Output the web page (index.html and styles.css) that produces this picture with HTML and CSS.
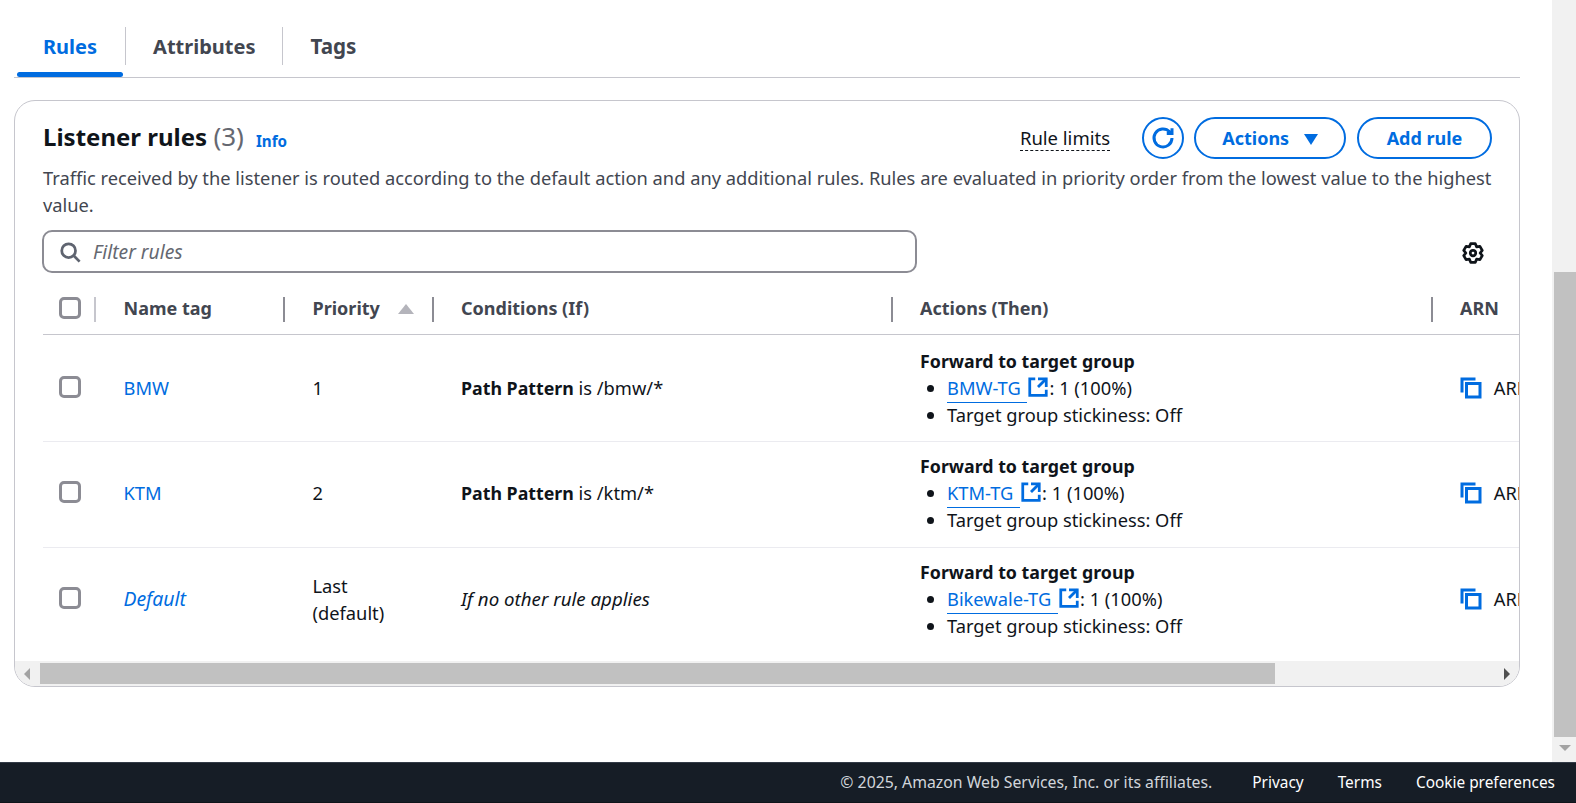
FILE: index.html
```html
<!doctype html>
<html>
<head>
<meta charset="UTF-8">
<title>Listener rules</title>
<link rel="stylesheet" href="styles.css">
</head>

<body>
  <div class="page">
    <main class="content">
      <div class="tabs">
        <a class="tab active" href="#"><span>Rules</span></a>
        <a class="tab" href="#"><span>Attributes</span></a>
        <a class="tab" href="#"><span>Tags</span></a>
      </div>

      <section class="card">
        <div class="card-top">
          <div class="card-head">
            <h2>Listener rules <span class="count">(3)</span></h2>
            <a class="info" href="#">Info</a>
            <a class="limits" href="#">Rule limits</a>
            <button class="btn round" aria-label="Refresh">
              <svg viewBox="0 0 16 16" width="24" height="24"><path d="M10.5 5H14V1.5"/><path d="M14 8a6 6 0 1 1-1.6-4.1L14 5"/></svg>
            </button>
            <button class="btn actions">Actions <i class="caret"></i></button>
            <button class="btn add">Add rule</button>
          </div>
          <p class="desc">Traffic received by the listener is routed according to the default action and any additional rules. Rules are evaluated in priority order from the lowest value to the highest<br>value.</p>
          <div class="filter-row">
            <label class="filter">
              <svg viewBox="0 0 16 16" width="22" height="22"><circle cx="7" cy="7" r="5"/><path d="M10.6 10.6 15 15"/></svg>
              <span>Filter rules</span>
            </label>
            <svg class="gear" viewBox="0 0 16 16" width="22" height="22"><path d="M9.69 1.21 10.6 3.5 13.04 3.14 14.73 6.07 13.2 8 14.73 9.93 13.04 12.86 10.6 12.5 9.69 14.79H6.31L5.4 12.5 2.96 12.86 1.27 9.93 2.8 8 1.27 6.07 2.96 3.14 5.4 3.5 6.31 1.21Z"/><circle cx="8" cy="8" r="2"/></svg>
          </div>
        </div>

        <div class="table-wrap">
          <table class="rules">
            <colgroup>
              <col class="c-check"><col class="c-name"><col class="c-prio"><col class="c-cond"><col class="c-act"><col class="c-arn">
            </colgroup>
            <thead>
              <tr>
                <th class="cell-check"><div class="th first"><i class="check"></i></div></th>
                <th class="wide"><div class="th">Name tag</div></th>
                <th class="wide"><div class="th">Priority <i class="sort"></i></div></th>
                <th><div class="th">Conditions (If)</div></th>
                <th><div class="th">Actions (Then)</div></th>
                <th><div class="th last">ARN</div></th>
              </tr>
            </thead>
            <tbody>
              <tr>
                <td class="cell-check"><i class="check"></i></td>
                <td class="wide"><a href="#">BMW</a></td>
                <td class="wide">1</td>
                <td><b>Path Pattern</b> is /bmw/*</td>
                <td>
                  <b>Forward to target group</b>
                  <ul>
                    <li><a class="ext" href="#"><span>BMW-TG </span><svg viewBox="0 0 16 16" width="22" height="22"><path d="M14 8V2H8"/><path d="M14 2 8 8"/><path d="M6 2H2v12h12v-4"/></svg></a>: 1 (100%)</li>
                    <li>Target group stickiness: Off</li>
                  </ul>
                </td>
                <td class="arn"><svg viewBox="0 0 16 16" width="24" height="24"><path d="M2 11V2h9"/><path d="M5 5h9v9H5z"/></svg> ARN</td>
              </tr>
              <tr>
                <td class="cell-check"><i class="check"></i></td>
                <td class="wide"><a href="#">KTM</a></td>
                <td class="wide">2</td>
                <td><b>Path Pattern</b> is /ktm/*</td>
                <td>
                  <b>Forward to target group</b>
                  <ul>
                    <li><a class="ext" href="#"><span>KTM-TG </span><svg viewBox="0 0 16 16" width="22" height="22"><path d="M14 8V2H8"/><path d="M14 2 8 8"/><path d="M6 2H2v12h12v-4"/></svg></a>: 1 (100%)</li>
                    <li>Target group stickiness: Off</li>
                  </ul>
                </td>
                <td class="arn"><svg viewBox="0 0 16 16" width="24" height="24"><path d="M2 11V2h9"/><path d="M5 5h9v9H5z"/></svg> ARN</td>
              </tr>
              <tr>
                <td class="cell-check"><i class="check"></i></td>
                <td class="wide"><a class="default" href="#"><em>Default</em></a></td>
                <td class="wide">Last<br>(default)</td>
                <td><em>If no other rule applies</em></td>
                <td>
                  <b>Forward to target group</b>
                  <ul>
                    <li><a class="ext" href="#"><span>Bikewale-TG </span><svg viewBox="0 0 16 16" width="22" height="22"><path d="M14 8V2H8"/><path d="M14 2 8 8"/><path d="M6 2H2v12h12v-4"/></svg></a>: 1 (100%)</li>
                    <li>Target group stickiness: Off</li>
                  </ul>
                </td>
                <td class="arn"><svg viewBox="0 0 16 16" width="24" height="24"><path d="M2 11V2h9"/><path d="M5 5h9v9H5z"/></svg> ARN</td>
              </tr>
            </tbody>
          </table>
        </div>

        <div class="hbar">
          <i class="arrow-left"></i>
          <div class="hbar-thumb"></div>
          <i class="arrow-right"></i>
        </div>
      </section>
    </main>

    <div class="vbar">
      <div class="vbar-thumb"></div>
      <i class="arrow-down"></i>
    </div>
  </div>

  <footer class="foot">
    <span class="copy">© 2025, Amazon Web Services, Inc. or its affiliates.</span>
    <a href="#">Privacy</a>
    <a href="#">Terms</a>
    <a href="#">Cookie preferences</a>
  </footer>
</body>
</html>
```

FILE: styles.css
```css
html, body {
  height: 100%;
  margin: 0;
}
body {
  display: flex;
  flex-direction: column;
  overflow: hidden;
  background-color: #fff;
  color: #0f141a;
  font-family: "Noto Sans", sans-serif;
  font-size: 18.3px;
  line-height: 27px;
}
a {
  color: #006ce0;
  text-decoration: none;
}
em {
  font-size: 18.7px;
}
svg {
  fill: none;
  stroke: currentColor;
  stroke-width: 2;
}
.page {
  flex: 1;
  display: flex;
  min-height: 0;
}
.content {
  flex: 1;
  min-width: 0;
  padding: 27px 32px 0 14px;
}

/* tabs */
.tabs {
  display: flex;
  height: 50px;
  padding-left: 3px;
  border-bottom: 1px solid #c6c6cd;
}
.tab {
  position: relative;
  height: 38px;
  padding: 0 28px 0 26px;
  border-right: 1px solid #c6c6cd;
  color: #424650;
  font-size: 20px;
  font-weight: 700;
  line-height: 39px;
}
.tab:last-child {
  border-right: none;
  padding-left: 27px;
  font-size: 20.6px;
}
.tab:nth-child(2) {
  padding: 0 27px;
}
.tab.active {
  color: #006ce0;
}
.tab.active:after {
  content: '';
  position: absolute;
  left: 0;
  right: 2px;
  top: 45px;
  height: 5px;
  border-radius: 3px;
  background-color: #006ce0;
}

/* card */
.card {
  margin-top: 22px;
  height: 587px;
  box-sizing: border-box;
  border: 1px solid #c6c6cd;
  border-radius: 21px;
  overflow: hidden;
  display: flex;
  flex-direction: column;
}
.card-top {
  padding: 16px 27px 0 27px;
}
.card-head {
  display: flex;
  align-items: center;
  height: 42px;
  padding-left: 1px;
}
.card-head h2 {
  margin: 0 0 3px;
  font-size: 24px;
  font-weight: 700;
  line-height: 36px;
}
.count {
  color: #656871;
  font-size: 26px;
  font-weight: 400;
}
.info {
  margin: 7px auto 0 12px;
  font-size: 15.2px;
  font-weight: 700;
}
.limits {
  margin-right: 32px;
  color: #0f141a;
  font-size: 18.5px;
  line-height: 24px;
  border-bottom: 1px dashed #0f141a;
}
.btn {
  height: 42px;
  box-sizing: border-box;
  border: 2px solid #006ce0;
  border-radius: 21px;
  background-color: #fff;
  color: #006ce0;
  font-family: inherit;
  font-size: 18px;
  font-weight: 700;
  padding: 0;
}
.round {
  width: 42px;
  margin-right: 10px;
  display: flex;
  align-items: center;
  justify-content: center;
}
.actions {
  width: 152px;
  margin-right: 11px;
}
.add {
  width: 135px;
}
.caret {
  display: inline-block;
  width: 0;
  height: 0;
  margin-left: 10px;
  border: 7px solid transparent;
  border-top: 11px solid #006ce0;
  border-bottom: none;
}
.desc {
  margin: 5px 0 0 1px;
  color: #424650;
}
.filter-row {
  display: flex;
  align-items: center;
  justify-content: space-between;
  margin-top: 12px;
  padding-right: 8px;
}
.filter {
  width: 875px;
  height: 43px;
  box-sizing: border-box;
  display: flex;
  align-items: center;
  gap: 12px;
  padding-left: 15px;
  border: 2px solid #8c8c94;
  border-radius: 10px;
  color: #656871;
  font-size: 19.3px;
  font-style: italic;
}
.filter svg {
  color: #5f6470;
}
.gear {
  margin-top: 2px;
  stroke-width: 2;
  stroke-linejoin: round;
}

/* table */
.table-wrap {
  flex: 1;
  margin: 12px 0 0 28px;
  overflow: hidden;
}
.rules {
  width: 1650px;
  table-layout: fixed;
  border-collapse: collapse;
}
.c-check { width: 53px; }
.c-name { width: 189px; }
.c-prio { width: 149px; }
.c-cond { width: 459px; }
.c-act { width: 540px; }
.c-arn { width: 260px; }
.rules th {
  height: 49px;
  padding: 0;
  border-bottom: 1px solid #c6c6cd;
  color: #424650;
  font-size: 18px;
  text-align: left;
  font-weight: 700;
}
.th {
  height: 25px;
  box-sizing: border-box;
  display: flex;
  align-items: center;
  gap: 18px;
  padding: 0 0 2px 27px;
  border-right: 2px solid #8c8c94;
}
.wide .th {
  padding-left: 27.5px;
}
.th.first {
  padding: 0 0 4px 16px;
  border-right: 2px solid #c6c6cd;
}
.th.last {
  border-right: none;
}
.sort {
  width: 0;
  height: 0;
  border: 8px solid transparent;
  border-bottom: 10px solid #b4b4bb;
  border-top: none;
}
.rules td {
  padding: 10px 0 14px 27px;
  border-bottom: 1px solid #ebebf0;
  vertical-align: middle;
}
.rules td.wide {
  padding-left: 27.5px;
}
.rules tbody tr:first-child td {
  padding-top: 12px;
  padding-bottom: 13px;
}
.rules tr:last-child td {
  border-bottom: none;
}
.rules td.cell-check {
  padding-left: 16px;
}
.rules b {
  font-size: 17.8px;
}
.default em {
  font-size: 19.4px;
}
.check {
  display: block;
  width: 22px;
  height: 22px;
  box-sizing: border-box;
  border: 3px solid #8c8c94;
  border-radius: 5px;
}
td .check {
  margin-bottom: 2px;
}
.rules ul {
  margin: -1px 0 0;
  padding: 0 0 0 27px;
}
.ext span {
  padding: 0 2px 2px 0;
  border-bottom: 1px solid #006ce0;
}
.ext svg {
  margin: -4px 0;
  vertical-align: 1px;
}
.rules .arn svg {
  color: #006ce0;
  margin: -4px 6px -4px -1px;
  vertical-align: -1px;
}
.arn {
  white-space: nowrap;
}

/* fake scrollbars */
.hbar {
  height: 25px;
  flex: none;
  display: flex;
  align-items: center;
  background-color: #f1f1f1;
}
.hbar-thumb {
  width: 1235px;
  height: 21px;
  background-color: #c1c1c1;
}
.arrow-left,
.arrow-right {
  width: 0;
  height: 0;
  border: 6px solid transparent;
}
.arrow-left {
  margin: 0 10px 0 9px;
  border-right: 6px solid #a3a3a3;
  border-left: none;
}
.arrow-right {
  margin-left: auto;
  margin-right: 9px;
  border-left: 6px solid #505050;
  border-right: none;
}
.vbar {
  width: 24px;
  flex: none;
  display: flex;
  flex-direction: column;
  align-items: flex-end;
  background-color: #f1f1f1;
}
.vbar-thumb {
  width: 22px;
  height: 465px;
  margin-top: 272px;
  background-color: #c1c1c1;
}
.arrow-down {
  width: 0;
  height: 0;
  margin: 8px 5px 0 0;
  border: 6px solid transparent;
  border-top: 6px solid #a3a3a3;
  border-bottom: none;
}

/* footer */
.foot {
  flex: none;
  height: 41px;
  box-sizing: border-box;
  display: flex;
  align-items: center;
  justify-content: flex-end;
  gap: 34px;
  padding-right: 21px;
  border-top: 1px solid #333b47;
  border-bottom: 1px solid #0f141a;
  background-color: #161d26;
  color: #d1d5db;
  font-size: 15.4px;
}
.foot a {
  color: #fff;
}
.copy {
  margin-right: 6px;
  font-size: 15.8px;
}
```
